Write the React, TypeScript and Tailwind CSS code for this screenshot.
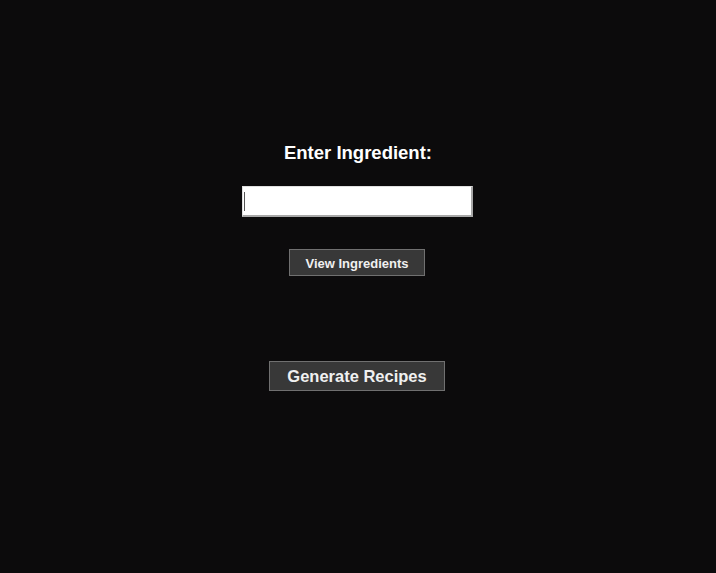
import * as React from 'react';

export default function App(): React.JSX.Element {
  return (
    <div className="flex h-[573px] w-[716px] flex-col items-center bg-[#0c0b0c] font-['Liberation_Sans',Arial,sans-serif] text-white">
      <h1 className="mt-[142px] text-[18.5px] font-bold leading-[22px]">Enter Ingredient:</h1>
      <div className="mr-[2px] mt-[22px] flex h-[31px] w-[231px] items-center border-b-2 border-l border-r-2 border-t border-[#a8a8a8] border-l-[#e0e0e0] border-t-[#e0e0e0] bg-white px-[1px]">
        <span className="h-[19px] w-px bg-[#555]" />
      </div>
      <button className="mr-[2px] mt-[32px] h-[27px] w-[136px] border border-[#707070] bg-[#383838] pt-[3px] text-[13px] font-bold text-[#f0f0f0]">
        View Ingredients
      </button>
      <button className="mr-[2px] mt-[85px] h-[30px] w-[176px] border border-[#707070] bg-[#383838] text-[16.5px] font-bold text-[#f0f0f0]">
        Generate Recipes
      </button>
    </div>
  );
}
